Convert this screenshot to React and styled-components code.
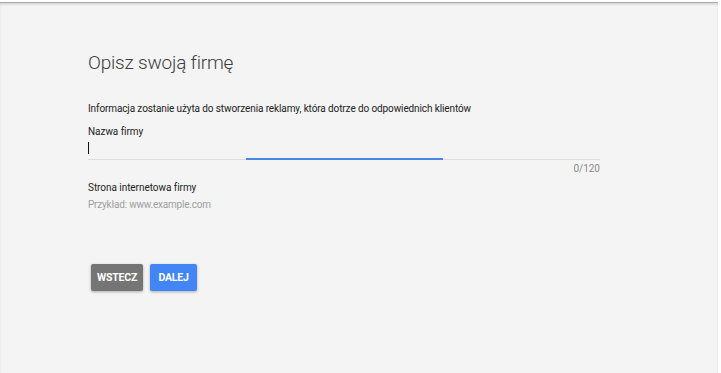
import React, { useState } from "react";
import styled, { createGlobalStyle } from "styled-components";

const Global = createGlobalStyle`
  html, body { margin: 0; padding: 0; background: #fff; }
  body { font-family: Roboto, "Liberation Sans", sans-serif; }
`;

export default function App() {
  const [name, setName] = useState("");

  return (
    <Page>
      <Global />
      <Content>
        <Title>Opisz swoją firmę</Title>
        <Intro>
          Informacja zostanie użyta do stworzenia reklamy, która dotrze do
          odpowiednich klientów
        </Intro>
        <Label>Nazwa firmy</Label>
        <Field>
          <Cursor />
          <Input value={name} onChange={(e) => setName(e.target.value)} />
          <Underline>
            <Focus />
          </Underline>
        </Field>
        <Counter>{name.length}/120</Counter>
        <Label $second>Strona internetowa firmy</Label>
        <Hint>Przykład: www.example.com</Hint>
        <Actions>
          <Button $variant="back">WSTECZ</Button>
          <Button $variant="next">DALEJ</Button>
        </Actions>
      </Content>
    </Page>
  );
}

const Page = styled.div`
  height: 371px;
  margin-top: 2px;
  margin-right: 3px;
  background: #f4f4f4;
  border-top: 1px solid #a9a9a9;
  box-shadow: inset 0 2px 3px -1px rgba(0, 0, 0, 0.18);
  box-sizing: border-box;
`;

const Content = styled.div`
  width: 512px;
  padding: 48px 0 0 88px;
  display: flex;
  flex-direction: column;
`;

const Title = styled.h1`
  margin: 0;
  font-size: 19px;
  font-weight: 300;
  letter-spacing: -0.2px;
  color: #3c3c3c;
  line-height: 24px;
`;

const Intro = styled.p`
  margin: 27px 0 0;
  font-size: 10px;
  letter-spacing: -0.11px;
  line-height: 14px;
  color: #222;
`;

const Label = styled.div`
  margin-top: ${(p) => (p.$second ? "5px" : "9px")};
  font-size: 10px;
  letter-spacing: -0.05px;
  line-height: 14px;
  color: #222;
`;

const Field = styled.div`
  position: relative;
  height: 20px;
  margin-top: 3px;
`;

const Cursor = styled.span`
  position: absolute;
  left: 0;
  top: 0;
  width: 1px;
  height: 12px;
  background: #111;
`;

const Input = styled.input`
  width: 100%;
  height: 16px;
  border: none;
  outline: none;
  background: transparent;
  padding: 0;
  font: inherit;
  font-size: 12px;
  caret-color: transparent;
`;

const Underline = styled.div`
  position: absolute;
  left: 0;
  right: 0;
  bottom: 2px;
  height: 1px;
  background: #dcdcdc;
`;

const Focus = styled.div`
  position: absolute;
  left: 158px;
  width: 197px;
  top: -1px;
  height: 2px;
  background: #4a86e8;
`;

const Counter = styled.div`
  align-self: flex-end;
  font-size: 10px;
  line-height: 14px;
  color: #8a8a8a;
`;

const Hint = styled.div`
  margin-top: 3px;
  font-size: 10px;
  letter-spacing: -0.2px;
  line-height: 14px;
  color: #9e9e9e;
`;

const Actions = styled.div`
  display: flex;
  gap: 7px;
  margin: 52px 0 0 3px;
`;

const Button = styled.button`
  height: 27px;
  min-width: 47px;
  padding: 0 6px;
  border: none;
  border-radius: 2px;
  font-family: Roboto, "Liberation Sans", sans-serif;
  font-size: 10.5px;
  font-weight: 700;
  letter-spacing: -0.2px;
  color: #fff;
  background: ${(p) => (p.$variant === "next" ? "#4285f4" : "#757575")};
  box-shadow: 0 1px 3px rgba(0, 0, 0, 0.3);
  cursor: pointer;
`;
